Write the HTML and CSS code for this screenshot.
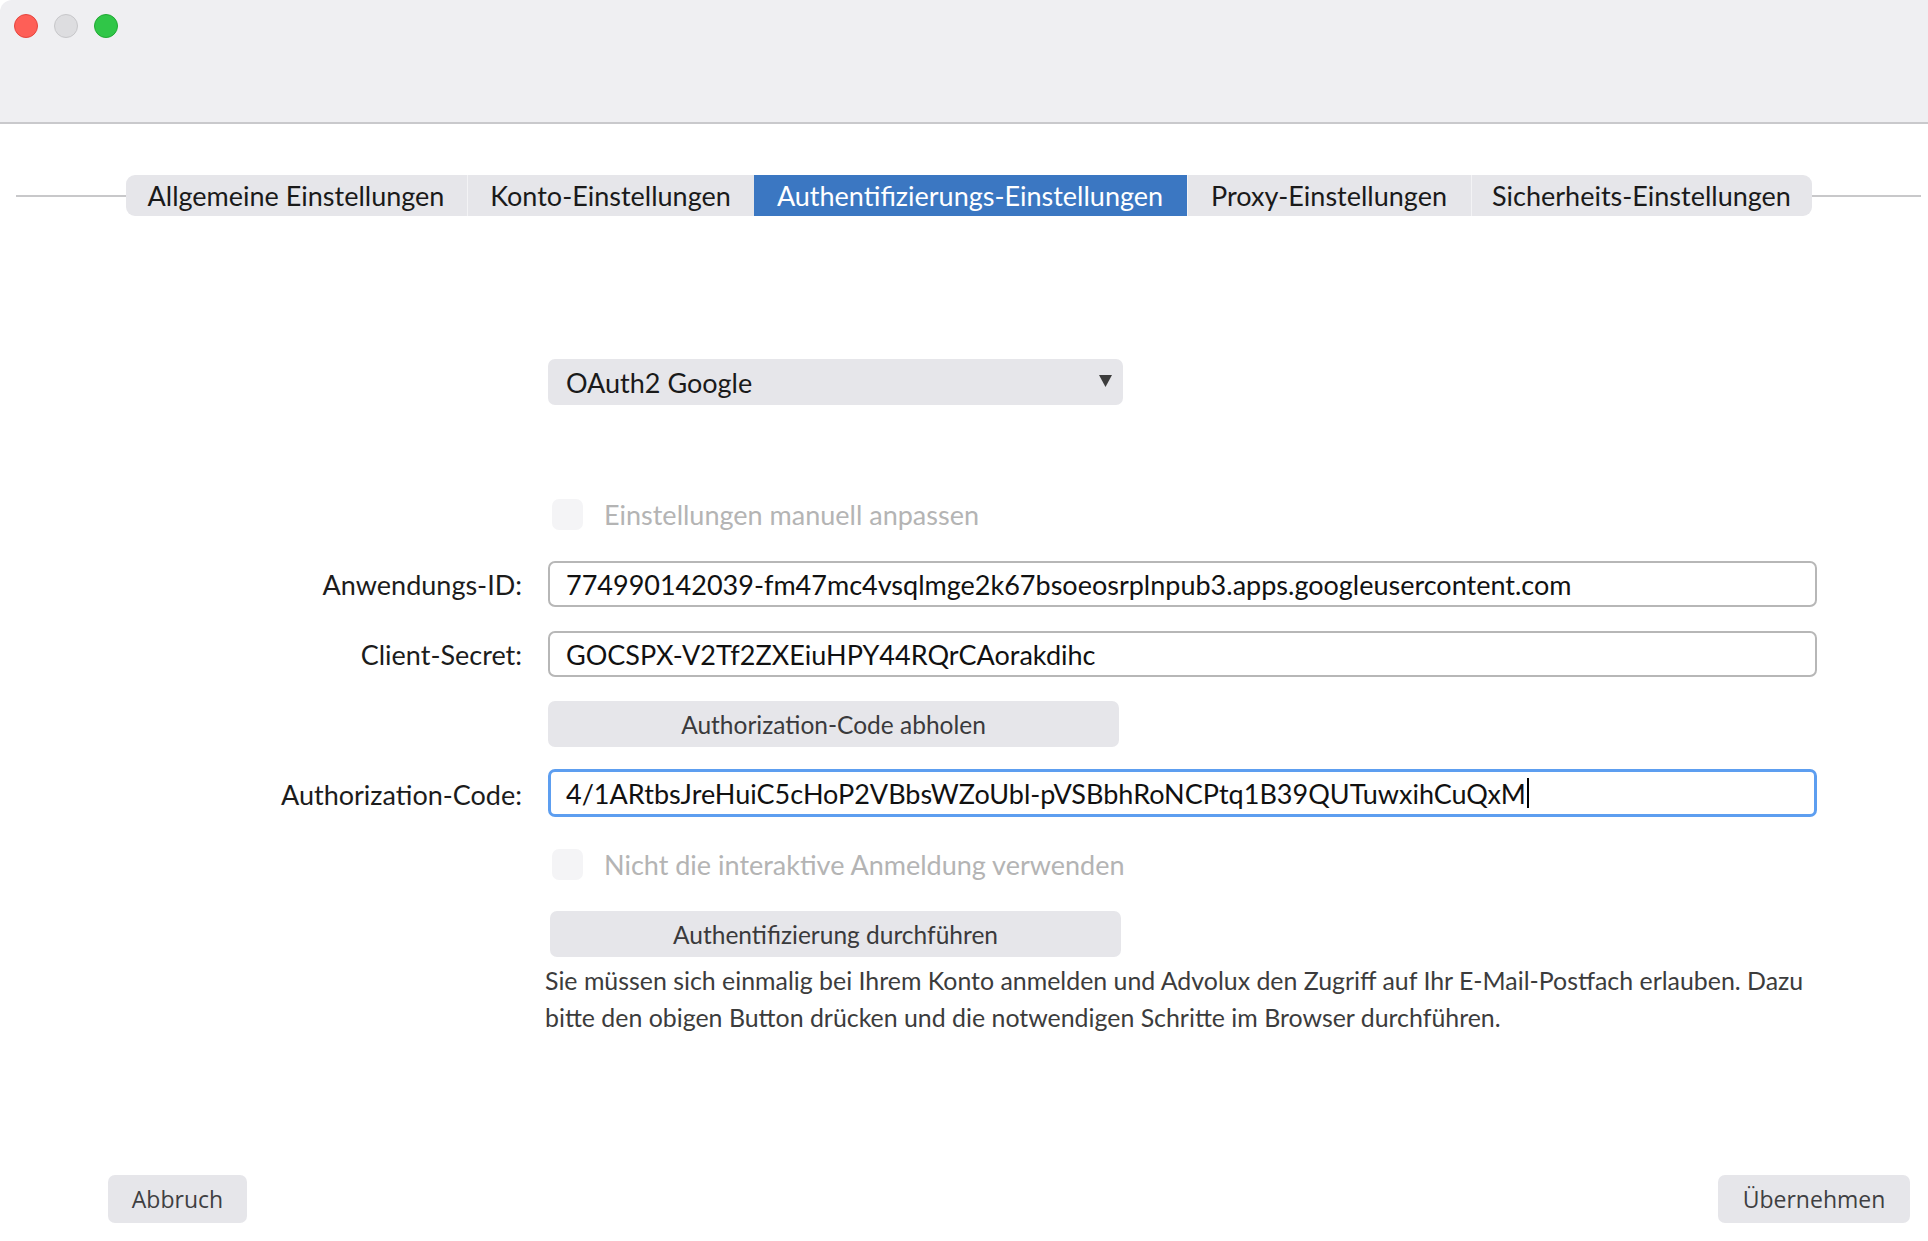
FILE: index.html
```html
<!DOCTYPE html>
<html lang="de">
<head>
<meta charset="utf-8">
<title>Einstellungen</title>
<link rel="stylesheet" href="styles.css">
</head>
<body>
<div class="window">
  <header class="titlebar">
    <span class="light red"></span>
    <span class="light grey"></span>
    <span class="light green"></span>
  </header>

  <nav class="tabbar">
    <span class="tabline"></span>
    <div class="tabs">
      <div class="tab t1">Allgemeine Einstellungen</div>
      <div class="tab t2">Konto-Einstellungen</div>
      <div class="tab t3 active">Authentifizierungs-Einstellungen</div>
      <div class="tab t4">Proxy-Einstellungen</div>
      <div class="tab t5">Sicherheits-Einstellungen</div>
    </div>
    <span class="tabline"></span>
  </nav>

  <main class="form">
    <div class="cell"></div>
    <div class="select">OAuth2 Google<svg class="arrow" width="13" height="12" viewBox="0 0 13 12"><path d="M0 0 H13 L6.5 12 Z" fill="#3d3d3d"/></svg></div>

    <div class="cell"></div>
    <div class="check gap-top"><span class="box"></span><span class="checklabel">Einstellungen manuell anpassen</span></div>

    <label class="label">Anwendungs-ID:</label>
    <div class="field">774990142039-fm47mc4vsqlmge2k67bsoeosrplnpub3.apps.googleusercontent.com</div>

    <label class="label">Client-Secret:</label>
    <div class="field">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</div>

    <div class="cell"></div>
    <div class="button wide">Authorization-Code abholen</div>

    <label class="label">Authorization-Code:</label>
    <div class="field focus">4/1ARtbsJreHuiC5cHoP2VBbsWZoUbl-pVSBbhRoNCPtq1B39QUTuwxihCuQxM<span class="caret"></span></div>

    <div class="cell"></div>
    <div class="check"><span class="box"></span><span class="checklabel">Nicht die interaktive Anmeldung verwenden</span></div>

    <div class="cell"></div>
    <div class="button wide b2">Authentifizierung durchführen</div>

    <div class="cell"></div>
    <p class="hint">Sie müssen sich einmalig bei Ihrem Konto anmelden und Advolux den Zugriff auf Ihr E-Mail-Postfach erlauben. Dazu bitte den obigen Button drücken und die notwendigen Schritte im Browser durchführen.</p>
  </main>

  <footer class="footer">
    <div class="button foot cancel">Abbruch</div>
    <div class="button foot apply">Übernehmen</div>
  </footer>
</div>
</body>
</html>
```

FILE: styles.css
```css
* { box-sizing: border-box; }

html, body {
  margin: 0;
  padding: 0;
  background: #ffffff;
}

body {
  width: 1928px;
  height: 1241px;
  overflow: hidden;
  font-family: "Lato", "Noto Sans", sans-serif;
  color: #1c1c1c;
}

.window {
  display: flex;
  flex-direction: column;
  height: 100%;
}

.titlebar {
  height: 124px;
  background: #efeff2;
  border-bottom: 2px solid #c9c9cc;
  border-top-left-radius: 12px;
  display: flex;
  gap: 16px;
  padding: 14px 0 0 14px;
  flex-shrink: 0;
}

.light {
  width: 24px;
  height: 24px;
  border-radius: 50%;
  border: 1px solid transparent;
}
.light.red { background: #fe5f57; border-color: #e5453e; }
.light.grey { background: #dddde0; border-color: #c7c7ca; }
.light.green { background: #30c648; border-color: #20a933; }

.tabbar {
  display: flex;
  align-items: center;
  margin: 51px 7px 0 16px;
}

.tabline {
  flex: 1;
  height: 2px;
  background: #c8c8ca;
}

.tabs {
  display: flex;
  height: 41px;
}

.tab {
  display: flex;
  align-items: center;
  justify-content: center;
  background: #e6e6ea;
  font-size: 27px;
  color: #1a1a1a;
  border-left: 1px solid #f3f3f5;
}
.tab.t1 { width: 341px; border-left: none; border-radius: 9px 0 0 9px; }
.tab.t2 { width: 287px; }
.tab.t3 { width: 433px; }
.tab.t4 { width: 284px; }
.tab.t5 { width: 341px; border-radius: 0 9px 9px 0; }
.tab.active {
  background: #3b77c2;
  color: #ffffff;
  border-left: none;
}

.form {
  display: grid;
  grid-template-columns: 522px 1269px;
  column-gap: 26px;
  row-gap: 24px;
  align-items: center;
  margin-top: 143px;
}

.label {
  text-align: right;
  font-size: 27px;
  color: #1c1c1c;
}

.select {
  width: 575px;
  height: 46px;
  background: #e6e6ea;
  border-radius: 7px;
  font-size: 27px;
  color: #1a1a1a;
  display: flex;
  align-items: center;
  padding: 0 18px 0 18px;
  position: relative;
}
.arrow {
  position: absolute;
  right: 11px;
  top: 16px;
}

.check {
  height: 46px;
  display: flex;
  align-items: center;
  gap: 21px;
  padding-left: 4px;
}
.check.gap-top { margin-top: 62px; }
.box {
  width: 31px;
  height: 31px;
  border-radius: 7px;
  background: #f4f4f6;
}
.checklabel {
  font-size: 27px;
  color: #b4b4b4;
}

.field {
  height: 46px;
  border: 2px solid #b7b7b7;
  border-radius: 7px;
  background: #ffffff;
  font-size: 27px;
  color: #111111;
  display: flex;
  align-items: center;
  padding: 0 16px;
  white-space: nowrap;
}
.field.focus {
  height: 48px;
  margin-top: -2px;
  border: 3px solid #5d9ef0;
  padding-left: 15px;
}
.caret {
  display: inline-block;
  width: 2px;
  height: 30px;
  background: #000000;
  margin-left: 1px;
}

.button {
  background: #e6e6ea;
  border-radius: 7px;
  color: #3a3a3c;
  font-size: 24.5px;
  display: flex;
  align-items: center;
  justify-content: center;
}
.button.wide {
  width: 571px;
  height: 46px;
}
.button.wide.b2 {
  margin-left: 2px;
  height: 46px;
}

.hint {
  margin: -19px 0 0 -3px;
  font-size: 24.9px;
  line-height: 37px;
  color: #3c3c3c;
}

.footer {
  margin-top: auto;
  display: flex;
  justify-content: space-between;
  padding: 0 18px 18px 108px;
}
.button.foot {
  height: 48px;
  font-family: "Open Sans", "Noto Sans", sans-serif;
  font-size: 23px;
  color: #3f3f42;
}
.button.cancel { width: 139px; }
.button.apply { width: 192px; }
```
